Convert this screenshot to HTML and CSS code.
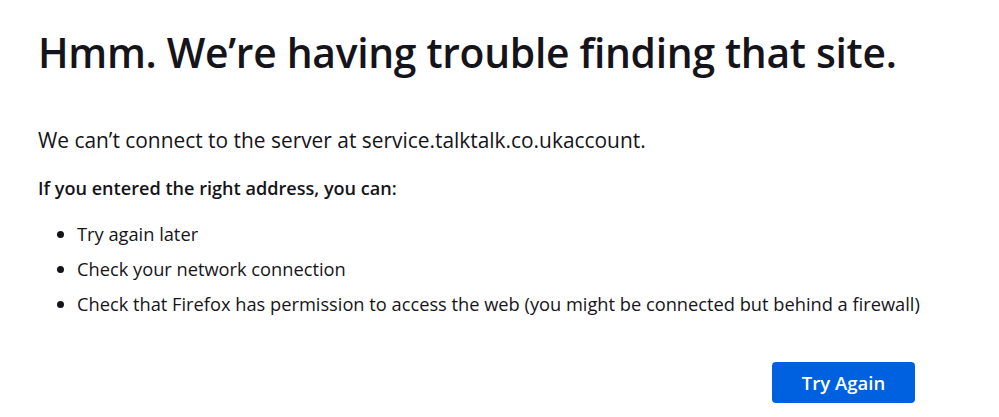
FILE: index.html
```html
<!DOCTYPE html>
<html>
<head>
<meta charset="utf-8">
<link rel="stylesheet" href="styles.css">
</head>
<body>
<main class="container">
  <h1 class="title">Hmm. We’re having trouble finding that site.</h1>
  <p class="intro">We can’t connect to the server at service.talktalk.co.ukaccount.</p>
  <p class="lead">If you entered the right address, you can:</p>
  <ul class="tips">
    <li>Try again later</li>
    <li>Check your network connection</li>
    <li>Check that Firefox has permission to access the web (you might be connected but behind a firewall)</li>
  </ul>
  <div class="actions">
    <button class="primary">Try Again</button>
  </div>
</main>
</body>
</html>
```
FILE: styles.css
```css
html, body {
  margin: 0;
  padding: 0;
  background: #ffffff;
  color: #15141a;
  font-family: "Open Sans", "Noto Sans", sans-serif;
}
.container {
  width: 877px;
  padding: 24px 0 0 38px;
}
.title {
  margin: 0;
  font-size: 40.8px;
  font-weight: 600;
  line-height: 56px;
  letter-spacing: -0.3px;
}
.intro {
  margin: 46px 0 0 0;
  font-size: 20.9px;
  line-height: 28px;
}
.lead {
  margin: 21px 0 0 0;
  font-size: 18.1px;
  font-weight: 600;
  line-height: 26px;
}
.tips {
  margin: 20px 0 0 0;
  padding-left: 39px;
  font-size: 18.25px;
  line-height: 26px;
  white-space: nowrap;
}
.tips li {
  margin-bottom: 9px;
}
.actions {
  display: flex;
  justify-content: flex-end;
  margin-top: 45px;
}
.primary {
  width: 143px;
  height: 41px;
  border: none;
  border-radius: 4px;
  background: #0061e0;
  color: #ffffff;
  font-family: "Open Sans", "Noto Sans", sans-serif;
  font-size: 18.5px;
  font-weight: 600;
}
```
